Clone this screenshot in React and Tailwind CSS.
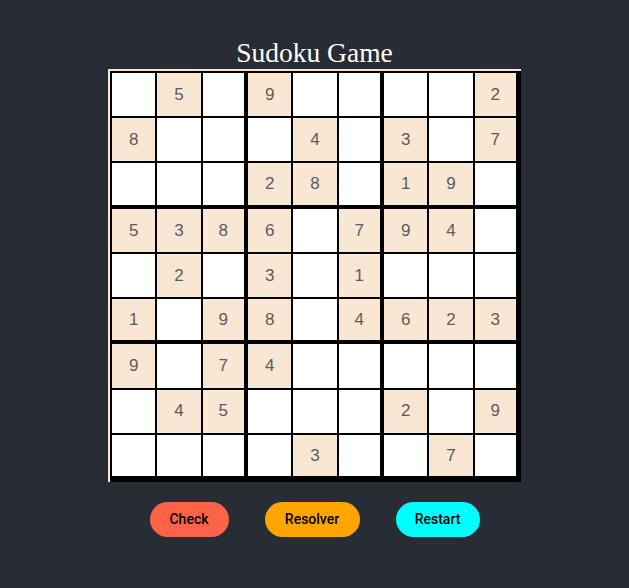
import React from 'react';

const puzzle = [
  [0, 5, 0, 9, 0, 0, 0, 0, 2],
  [8, 0, 0, 0, 4, 0, 3, 0, 7],
  [0, 0, 0, 2, 8, 0, 1, 9, 0],
  [5, 3, 8, 6, 0, 7, 9, 4, 0],
  [0, 2, 0, 3, 0, 1, 0, 0, 0],
  [1, 0, 9, 8, 0, 4, 6, 2, 3],
  [9, 0, 7, 4, 0, 0, 0, 0, 0],
  [0, 4, 5, 0, 0, 0, 2, 0, 9],
  [0, 0, 0, 0, 3, 0, 0, 7, 0],
];

const Cell = ({ value, row, col }) => {
  const thickRight = col % 3 === 2 ? 'border-r-[3px]' : 'border-r';
  const thickBottom = row % 3 === 2 ? 'border-b-[3px]' : 'border-b';
  return (
    <div
      className={`flex items-center justify-center border-l border-t border-black ${thickRight} ${thickBottom} ${
        value ? 'bg-[#f9e6d3]' : 'bg-white'
      }`}
    >
      {value ? (
        <span className="text-[17px] text-[#5a5a62] font-['Liberation_Sans',Arial,sans-serif]">{value}</span>
      ) : null}
    </div>
  );
};

export default function App() {
  return (
    <div className="min-h-screen bg-[#282c34] flex flex-col items-center pt-[37px]">
      <h1 className="text-white text-[27.5px] leading-[32px] font-['Liberation_Serif','Times_New_Roman',serif]">
        Sudoku Game
      </h1>
      <div className="w-[413px] h-[413px] bg-[#f9e6d3] pl-[2px] pt-[2px]">
        <div className="grid grid-cols-9 grid-rows-9 h-full border-l border-t border-r-2 border-b-[3px] border-black bg-white">
          {puzzle.map((r, ri) =>
            r.map((v, ci) => <Cell key={`${ri}-${ci}`} value={v} row={ri} col={ci} />)
          )}
        </div>
      </div>
      <div className="flex gap-[36px] mt-[20px] font-['Roboto',Arial,sans-serif] text-[14px] font-medium text-black">
        <button className="w-[79px] h-[35px] rounded-full bg-[#ff6347]">Check</button>
        <button className="w-[95px] h-[35px] rounded-full bg-[#ffa500]">Resolver</button>
        <button className="w-[84px] h-[35px] rounded-full bg-[#00ffff]">Restart</button>
      </div>
    </div>
  );
}
